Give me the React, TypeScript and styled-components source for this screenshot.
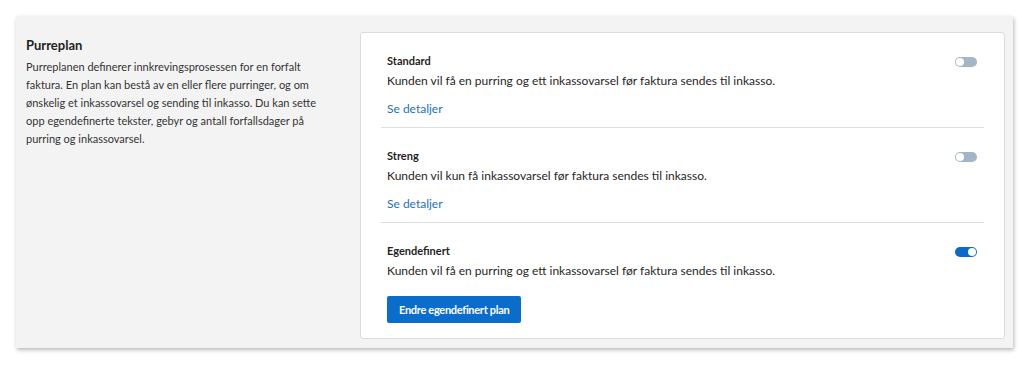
import styled, { createGlobalStyle } from 'styled-components';

const GlobalStyle = createGlobalStyle`
  html, body {
    margin: 0;
    padding: 0;
    background: #ffffff;
  }
  body {
    font-family: Lato, "Open Sans", Arial, sans-serif;
    color: #262626;
  }
`

const Page = styled.div`
  padding: 16px 17px 17px 16px;
`

const Panel = styled.section`
  display: flex;
  align-items: flex-start;
  background: #f3f3f3;
  box-shadow: 1px 2px 4px rgba(0, 0, 0, 0.28);
  padding: 16px 8px 9px 0;
  height: 332px;
  box-sizing: border-box;
`

const Intro = styled.div`
  width: 344px;
  flex-shrink: 0;
  box-sizing: border-box;
  padding: 4px 36px 0 10px;
`

const IntroTitle = styled.h2`
  margin: 0;
  font-size: 13px;
  line-height: 18px;
  font-weight: 700;
  color: #1f1f1f;
`

const IntroText = styled.p`
  margin: 4px 0 0;
  font-size: 11px;
  line-height: 18px;
  color: #333;
`

const Card = styled.div`
  flex: 1;
  align-self: stretch;
  background: #fff;
  border: 1px solid #dcdcdc;
  border-radius: 3px;
  padding: 0 20px;
  box-sizing: border-box;
`

const Option = styled.div`
  display: flex;
  justify-content: space-between;
  align-items: flex-start;
  padding: 20px 7px 9px 6px;
  border-bottom: 1px solid #dedede;

  &:last-child {
    border-bottom: none;
    padding-bottom: 0;
  }
`

const OptionBody = styled.div`
  display: flex;
  flex-direction: column;
  align-items: flex-start;
`

const OptionTitle = styled.h3`
  margin: 0;
  font-size: 11px;
  line-height: 16px;
  font-weight: 700;
  color: #1f1f1f;
`

const OptionText = styled.p`
  margin: 3px 0 0;
  font-size: 12px;
  line-height: 18px;
  color: #262626;
`

const DetailsLink = styled.a`
  margin-top: 10px;
  font-size: 12px;
  line-height: 18px;
  color: #1b6fc8;
  text-decoration: none;
  cursor: pointer;
`

const PrimaryButton = styled.button`
  margin-top: 16px;
  height: 27px;
  padding: 0 12px;
  border: none;
  border-radius: 2px;
  background: #0a6dcc;
  color: #fff;
  font-family: inherit;
  font-size: 11px;
  letter-spacing: -0.3px;
  font-weight: 700;
  cursor: pointer;
`

const Toggle = styled.span<{ $on?: boolean }>`
  position: relative;
  display: inline-block;
  width: 22px;
  height: 10px;
  margin-top: 4px;
  border-radius: 5px;
  background: ${p => (p.$on ? '#0b69c8' : '#a2b6c6')};

  &::after {
    content: '';
    position: absolute;
    top: 1px;
    left: ${p => (p.$on ? '13px' : '1px')};
    width: 8px;
    height: 8px;
    border-radius: 50%;
    background: #fff;
  }
`

const plans = [
  { title: 'Standard', text: 'Kunden vil få en purring og ett inkassovarsel før faktura sendes til inkasso.', on: false, custom: false },
  { title: 'Streng', text: 'Kunden vil kun få inkassovarsel før faktura sendes til inkasso.', on: false, custom: false },
  { title: 'Egendefinert', text: 'Kunden vil få en purring og ett inkassovarsel før faktura sendes til inkasso.', on: true, custom: true },
]

const App = () => {
  return (
    <>
      <GlobalStyle />
      <Page>
        <Panel>
          <Intro>
            <IntroTitle>Purreplan</IntroTitle>
            <IntroText>
              Purreplanen definerer innkrevingsprosessen for en forfalt faktura. En plan kan bestå av en eller flere purringer, og om ønskelig et inkassovarsel og sending til inkasso. Du kan sette opp egendefinerte tekster, gebyr og antall forfallsdager på purring og inkassovarsel.
            </IntroText>
          </Intro>
          <Card>
            {plans.map(plan => (
              <Option key={plan.title}>
                <OptionBody>
                  <OptionTitle>{plan.title}</OptionTitle>
                  <OptionText>{plan.text}</OptionText>
                  {plan.custom
                    ? <PrimaryButton>Endre egendefinert plan</PrimaryButton>
                    : <DetailsLink>Se detaljer</DetailsLink>}
                </OptionBody>
                <Toggle $on={plan.on} />
              </Option>
            ))}
          </Card>
        </Panel>
      </Page>
    </>
  );
}

export default App;
